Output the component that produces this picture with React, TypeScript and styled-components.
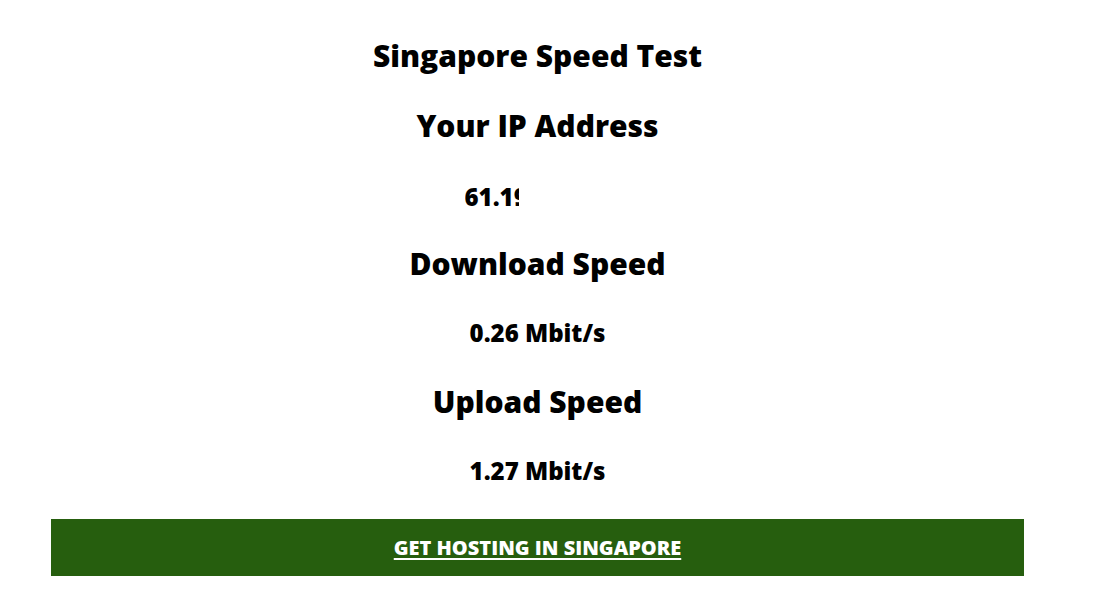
import * as React from 'react';
import styled, { createGlobalStyle } from 'styled-components';

const GlobalStyle = createGlobalStyle`
	html, body {
		margin: 0;
		padding: 0;
		background: #ffffff;
	}
	body {
		font-family: "Open Sans", "Liberation Sans", sans-serif;
		color: #000000;
	}
`;

const Page = styled.div`
	width: 973px;
	margin-left: 51px;
	padding-top: 20px;
`;

const Row = styled.div<{ $h: number; $size: number }>`
	height: ${p => p.$h}px;
	line-height: ${p => p.$h}px;
	font-size: ${p => p.$size}px;
	font-weight: 800;
	text-align: center;
	white-space: nowrap;
`;

const IpWrap = styled.div`
	display: flex;
	justify-content: center;
	padding-top: 2px;
`;

const IpBox = styled.div`
	width: 146px;
	text-align: left;
`;

const IpClip = styled.span`
	display: inline-block;
	width: 54px;
	overflow: hidden;
	vertical-align: top;
`;

const HostingBar = styled.a`
	display: flex;
	align-items: center;
	justify-content: center;
	height: 57px;
	margin-top: 14px;
	background: #265e0e;
	color: #ffffff;
	font-size: 20px;
	font-weight: 800;
	text-decoration: underline;
	text-underline-offset: 3px;
	text-decoration-thickness: 2px;
`;

export default function App() {
	return (
		<>
			<GlobalStyle />
			<Page>
				<Row $h={71} $size={30}>Singapore Speed Test</Row>
				<Row $h={70} $size={30}>Your IP Address</Row>
				<Row $h={68} $size={24}>
					<IpWrap>
						<IpBox>
							<IpClip>61.19</IpClip>
						</IpBox>
					</IpWrap>
				</Row>
				<Row $h={69} $size={30}>Download Speed</Row>
				<Row $h={69} $size={24}>0.26 Mbit/s</Row>
				<Row $h={69} $size={30}>Upload Speed</Row>
				<Row $h={69} $size={24}>1.27 Mbit/s</Row>
				<HostingBar href="#">GET HOSTING IN SINGAPORE</HostingBar>
			</Page>
		</>
	);
}
